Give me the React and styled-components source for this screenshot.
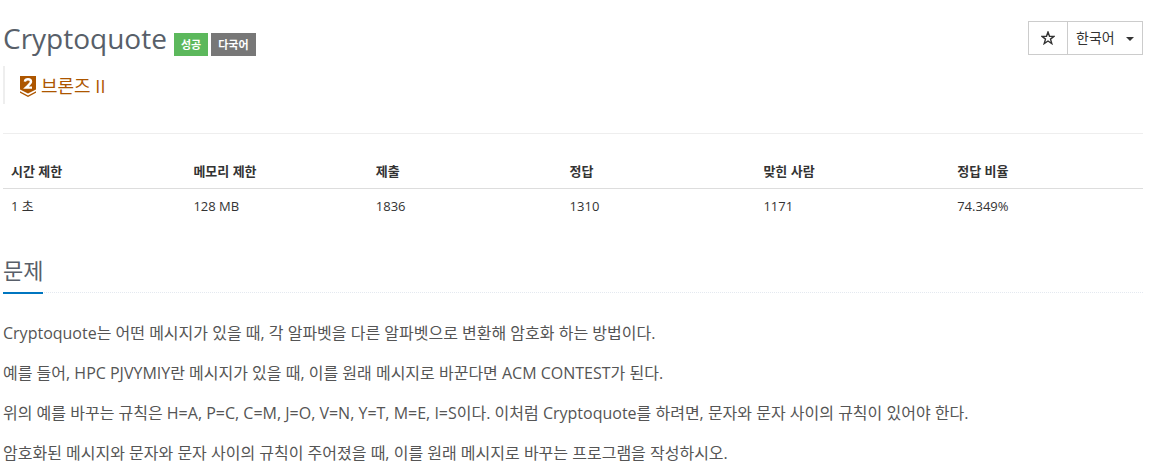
import React from "react";
import styled, { createGlobalStyle } from "styled-components";

const GlobalStyle = createGlobalStyle`
  *, *::before, *::after { box-sizing: border-box; }
  body {
    margin: 0;
    background: #fff;
    color: #333;
    font-family: "Open Sans", "Noto Sans CJK KR", sans-serif;
    font-size: 13px;
    line-height: 20px;
  }
`;

const Page = styled.main`
  padding: 20px 7px 0 3px;
`;

const Header = styled.header`
  display: flex;
  justify-content: space-between;
  align-items: flex-start;
  height: 46px;
`;

const TitleLine = styled.div`
  display: flex;
  align-items: flex-end;
  gap: 3px;
  height: 36px;
`;

const Title = styled.h1`
  margin: 0 4px 0 0;
  color: #585f69;
  font-size: 28px;
  font-weight: 400;
  line-height: 36px;
`;

const Label = styled.span`
  padding: 0 7px;
  background: ${(p) => p.$color};
  color: #fff;
  font-size: 11px;
  font-weight: 700;
  line-height: 23px;
`;

const ButtonGroup = styled.div`
  display: flex;
  margin-top: 1px;
  border: 1px solid #ccc;
`;

const StarButton = styled.button`
  display: flex;
  align-items: center;
  justify-content: center;
  width: 38px;
  height: 32px;
  padding: 0;
  border: 0;
  background: #fff;
  color: #333;
`;

const SelectBox = styled.div`
  position: relative;
  border-left: 1px solid #ccc;
`;

const LanguageSelect = styled.select`
  display: block;
  appearance: none;
  width: 74px;
  height: 32px;
  padding: 0 24px 2px 8px;
  border: 0;
  border-radius: 0;
  background: #fff;
  color: #333;
  font-family: inherit;
  font-size: 14px;
`;

const Caret = styled.span`
  position: absolute;
  top: 15px;
  right: 8px;
  border-top: 4px solid #333;
  border-left: 4px solid transparent;
  border-right: 4px solid transparent;
  pointer-events: none;
`;

const Tier = styled.blockquote`
  display: flex;
  align-items: center;
  gap: 5px;
  height: 38px;
  margin: 0 0 29px;
  padding: 2px 0 0 15px;
  border-left: 2px solid #eee;
  color: #ad5600;
  font-size: 18px;
  line-height: 24px;
`;

const Divider = styled.hr`
  margin: 0 0 20px;
  border: 0;
  border-top: 1px solid #eee;
`;

const InfoTable = styled.table`
  width: 100%;
  table-layout: fixed;
  border-collapse: collapse;

  th, td {
    padding: 8px;
    text-align: left;
    line-height: 18px;
  }
  th {
    border-bottom: 1px solid #ddd;
    font-size: 13px;
    font-weight: 700;
  }
`;

const Column = styled.col`
  width: ${(p) => p.$width};
`;

const Headline = styled.div`
  display: flex;
  margin: 29px 0 25px;
  border-bottom: 1px dotted #e4e9f0;
`;

const SectionTitle = styled.h2`
  margin: 0 0 -2px;
  padding-bottom: 4px;
  border-bottom: 2px solid #0076c0;
  color: #585f69;
  font-size: 22px;
  font-weight: 400;
  line-height: 36px;
`;

const Paragraph = styled.p`
  margin: 0 0 10px;
  color: #555;
  font-size: 16px;
  line-height: 30px;
`;

const StarIcon = () => (
  <svg width="14" height="14" viewBox="0 0 14 14" fill="none" stroke="currentColor" strokeWidth="1.4" aria-hidden="true">
    <path d="M7 1 8.5 5.2 13 5.4 9.5 8.1 10.8 12.6 7 10 3.2 12.6 4.5 8.1 1 5.4 5.5 5.2Z" />
  </svg>
);

const TierIcon = () => (
  <svg width="16" height="21" viewBox="0 0 16 21" role="img" aria-label="Bronze 2">
    <path d="M0 0H16V13.6L8 17.6 0 13.6Z" fill="#ad5600" />
    <path d="M0 15.3 8 19.6 16 15.3V16.7L8 21 0 16.7Z" fill="#ad5600" />
    <path d="M4.9 5.6C5.2 3.9 6.5 3.3 8 3.3C9.8 3.3 11 4.2 11 5.7C11 7.4 8.8 8.8 6 11.6H12" fill="none" stroke="#fff" strokeWidth="2.4" />
  </svg>
);

const columns = [
  { name: "시간 제한", value: "1 초", width: "16%" },
  { name: "메모리 제한", value: "128 MB", width: "16%" },
  { name: "제출", value: "1836", width: "17%" },
  { name: "정답", value: "1310", width: "17%" },
  { name: "맞힌 사람", value: "1171", width: "17%" },
  { name: "정답 비율", value: "74.349%", width: "17%" },
];

const paragraphs = [
  "Cryptoquote는 어떤 메시지가 있을 때, 각 알파벳을 다른 알파벳으로 변환해 암호화 하는 방법이다.",
  "예를 들어, HPC PJVYMIY란 메시지가 있을 때, 이를 원래 메시지로 바꾼다면 ACM CONTEST가 된다.",
  "위의 예를 바꾸는 규칙은 H=A, P=C, C=M, J=O, V=N, Y=T, M=E, I=S이다. 이처럼 Cryptoquote를 하려면, 문자와 문자 사이의 규칙이 있어야 한다.",
  "암호화된 메시지와 문자와 문자 사이의 규칙이 주어졌을 때, 이를 원래 메시지로 바꾸는 프로그램을 작성하시오.",
];

export default function App() {
  return (
    <Page lang="ko">
      <GlobalStyle />
      <Header>
        <TitleLine>
          <Title>Cryptoquote</Title>
          <Label $color="#5cb85c">성공</Label>
          <Label $color="#777">다국어</Label>
        </TitleLine>
        <ButtonGroup>
          <StarButton type="button" aria-label="즐겨찾기">
            <StarIcon />
          </StarButton>
          <SelectBox>
            <LanguageSelect aria-label="언어" defaultValue="ko">
              <option value="ko">한국어</option>
            </LanguageSelect>
            <Caret />
          </SelectBox>
        </ButtonGroup>
      </Header>
      <Tier>
        <TierIcon />
        <span>브론즈 II</span>
      </Tier>
      <Divider />
      <InfoTable>
        <colgroup>
          {columns.map((c) => <Column key={c.name} $width={c.width} />)}
        </colgroup>
        <thead>
          <tr>{columns.map((c) => <th key={c.name} scope="col">{c.name}</th>)}</tr>
        </thead>
        <tbody>
          <tr>{columns.map((c) => <td key={c.name}>{c.value}</td>)}</tr>
        </tbody>
      </InfoTable>
      <section>
        <Headline>
          <SectionTitle>문제</SectionTitle>
        </Headline>
        {paragraphs.map((text) => <Paragraph key={text}>{text}</Paragraph>)}
      </section>
    </Page>
  );
}
